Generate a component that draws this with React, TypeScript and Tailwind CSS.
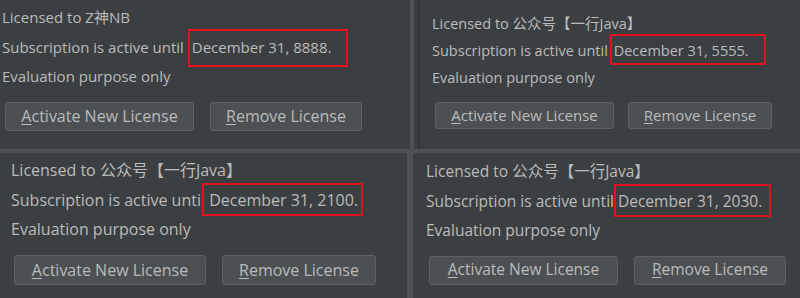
const font = '"Open Sans", "Noto Sans CJK SC", sans-serif'

interface PanelProps {
  owner: string
  date: string
  className: string
  textClass: string
  lineClass: string
  activateClass: string
  removeClass: string
  boxClass: string
  dateClass: string
  buttonsClass: string
}

function Panel({ owner, date, className, textClass, lineClass, activateClass, removeClass, boxClass, dateClass, buttonsClass }: PanelProps) {
  return (
    <div className={`flex flex-col text-[#bbbbbb] ${className} ${textClass}`} style={{ fontFamily: font }}>
      <div className={lineClass}>Licensed to {owner}</div>
      <div className={`${lineClass} whitespace-nowrap`}>
        Subscription is active until{' '}
        <span className={`relative ${dateClass}`}>
          {date}
          {/* red highlight box */}
          <span className={`absolute border-2 border-[#e0121f] ${boxClass}`} />
        </span>
      </div>
      <div className={lineClass}>Evaluation purpose only</div>
      <div className={`flex ${buttonsClass}`}>
        <button className={`bg-[#4c5052] border border-[#5e6163] rounded-[3px] text-center ${activateClass}`}>
          <span className="underline underline-offset-2">A</span>ctivate New License
        </button>
        <button className={`bg-[#4c5052] border border-[#5e6163] rounded-[3px] text-center ${removeClass}`}>
          <span className="underline underline-offset-2">R</span>emove License
        </button>
      </div>
    </div>
  )
}

export default function App() {
  return (
    <div className="w-[800px] h-[298px] bg-[#3c3f41] flex flex-col overflow-hidden">
      {/* top row */}
      <div className="flex h-[149px]">
        <Panel
          owner="Z神NB"
          date="December 31, 8888."
          className="w-[410px] pl-[2px] pt-[3px]"
          textClass="text-[15px]"
          lineClass="leading-[29.5px]"
          buttonsClass="mt-[10px] gap-4 pl-[3px] text-[16px]"
          activateClass="w-[189px] h-[29px]"
          removeClass="w-[152px] h-[29px]"
          dateClass="ml-[4px]"
          boxClass="-left-[4px] -right-[17px] -top-[8px] -bottom-[10px]"
        />
        <div className="w-[4px] bg-[#4e5153]" />
        <div className="w-[4px]" />
        <div className="w-[2px] bg-[#333537]" />
        <Panel
          owner="公众号【一行Java】"
          date="December 31, 5555."
          className="flex-1 pl-[12px] pt-[10px]"
          textClass="text-[14.5px]"
          lineClass="leading-[27px]"
          buttonsClass="mt-[11px] gap-[14px] pl-[3px] text-[15px]"
          activateClass="w-[179px] h-[27px]"
          removeClass="w-[144px] h-[27px]"
          dateClass="ml-[2px]"
          boxClass="-left-[4px] -right-[17px] -top-[7px] -bottom-[5px]"
        />
      </div>
      {/* horizontal separator */}
      <div className="h-[4px] bg-[#4e5153]" />
      {/* bottom row */}
      <div className="flex flex-1">
        <Panel
          owner="公众号【一行Java】"
          date="December 31, 2100."
          className="w-[407px] pl-[11px] pt-[3px]"
          textClass="text-[16px]"
          lineClass="leading-[29.5px]"
          buttonsClass="mt-[10px] gap-4 pl-[3px]"
          activateClass="w-[192px] h-[30px]"
          removeClass="w-[154px] h-[30px]"
          dateClass=""
          boxClass="-left-[7px] -right-[5px] -top-[6px] -bottom-[5px]"
        />
        <div className="w-[6px] bg-[#4e5153]" />
        <Panel
          owner="公众号【一行Java】"
          date="December 31, 2030."
          className="flex-1 pl-[13px] pt-[4px]"
          textClass="text-[15.5px]"
          lineClass="leading-[29.5px]"
          buttonsClass="mt-[10px] gap-4 pl-[3px]"
          activateClass="w-[189px] h-[29px]"
          removeClass="w-[152px] h-[29px]"
          dateClass=""
          boxClass="-left-[4px] -right-[9px] -top-[6px] -bottom-[5px]"
        />
      </div>
    </div>
  )
}
